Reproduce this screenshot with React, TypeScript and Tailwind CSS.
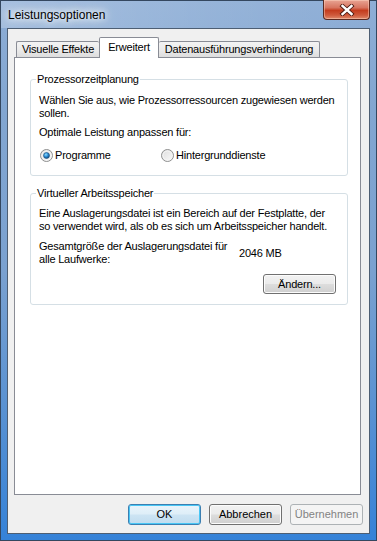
import React from 'react';

const FONT = "font-['Liberation_Sans',Arial,sans-serif]";

const Radio: React.FC<{ checked?: boolean; label: string }> = ({ checked, label }) => (
    <label className="flex items-center">
        <svg width="13" height="13" viewBox="0 0 13 13" className="mr-[2px] shrink-0">
            <defs>
                <linearGradient id="rbg" x1="0" y1="0" x2="1" y2="1">
                    <stop offset="0" stopColor="#dcdcdc" />
                    <stop offset="1" stopColor="#fbfbfb" />
                </linearGradient>
                <radialGradient id="rdot" cx="0.4" cy="0.35" r="0.7">
                    <stop offset="0" stopColor="#8fe0ff" />
                    <stop offset="0.5" stopColor="#2a8ad4" />
                    <stop offset="1" stopColor="#0b3d6b" />
                </radialGradient>
            </defs>
            <circle cx="6.5" cy="6.5" r="6" fill="url(#rbg)" stroke="#8e8f8f" strokeWidth="1" />
            <circle cx="6.5" cy="6.5" r="4.5" fill="none" stroke="#f4f4f4" strokeWidth="1" />
            {checked && <circle cx="6.5" cy="6.5" r="3" fill="url(#rdot)" stroke="#1c5380" strokeWidth="0.6" />}
        </svg>
        <span>{label}</span>
    </label>
);

const Btn: React.FC<{ label: string; kind?: 'default' | 'normal' | 'disabled'; h?: string }> = ({ label, kind = 'normal', h = 'h-[21px]' }) => {
    const styles = {
        normal: 'border-[#707070] bg-[linear-gradient(180deg,#f2f2f2_0%,#ebebeb_48%,#dddddd_52%,#cfcfcf_100%)] text-black shadow-[inset_0_0_0_1px_#fcfcfc]',
        default: 'border-[#3c7fb1] bg-[linear-gradient(180deg,#e9f4fb_0%,#deeef8_48%,#cde4f3_52%,#c0dcef_100%)] text-black shadow-[inset_0_0_0_1px_#48c6f5]',
        disabled: 'border-[#adb2b5] bg-[#f4f4f4] text-[#838383]',
    } as const;
    return (
        <div className={`w-[73px] ${h} rounded-[3px] border flex items-center justify-center text-[11px] ${styles[kind]}`}>
            {label}
        </div>
    );
};

const CloseButton = () => (
    <div className="w-[47px] h-[20px] -mt-[1px] rounded-b-[4px] border border-[#5a2a22] border-t-0 bg-[linear-gradient(180deg,#e8a493_0%,#d77560_40%,#c43c1e_55%,#cf5a3c_80%,#e08a6c_100%)] shadow-[inset_0_0_0_1px_rgba(255,220,200,0.45)] flex items-center justify-center">
        <svg width="16" height="12" viewBox="0 0 16 12">
            <path d="M3.5 2 L12.5 10 M12.5 2 L3.5 10" stroke="#4a1a12" strokeWidth="4.2" strokeLinecap="square" />
            <path d="M3.5 2 L12.5 10 M12.5 2 L3.5 10" stroke="#ffffff" strokeWidth="2.4" strokeLinecap="square" />
        </svg>
    </div>
);

export default function App() {
    return (
        <div className={`${FONT} w-[377px] h-[541px] flex flex-col border border-[#34475f] px-[6px] pb-[6px] bg-[linear-gradient(180deg,#8eaed6_0%,#82a6d1_20%,#7aa1d0_50%,#5a92d2_75%,#3582d8_100%)] text-black`}>
            {/* title bar */}
            <div className="h-[27px] -mx-[6px] px-[6px] flex items-start shrink-0 bg-[linear-gradient(90deg,rgba(255,255,255,0.22)_0%,rgba(255,255,255,0.08)_55%,rgba(255,255,255,0)_100%)]">
                <span className="mt-[7px] ml-[1px] text-[12px] leading-[15px] [text-shadow:0_0_6px_#ffffff,0_0_10px_#ffffff,0_0_14px_#e8f2ff]">
                    Leistungsoptionen
                </span>
                <div className="ml-auto">
                    <CloseButton />
                </div>
            </div>

            {/* client area */}
            <div className="flex-1 border border-[#4d5e73] bg-[#f0f0f0] flex flex-col text-[11px] tracking-[-0.2px]">
                {/* tabs */}
                <div className="h-[20px] mt-[8px] pl-[8px] flex items-end shrink-0">
                    <div className="w-[83px] h-[16px] border border-b-0 border-r-0 border-[#898c95] rounded-t-[2px] bg-[linear-gradient(180deg,#f3f3f3_0%,#ebebeb_50%,#dddddd_100%)] flex items-center justify-center leading-[13px]">
                        Visuelle Effekte
                    </div>
                    <div className="relative z-10 w-[60px] h-[21px] -mb-[1px] border border-b-0 border-[#898c95] rounded-t-[2px] bg-white flex justify-center pt-[3px] leading-[13px]">
                        Erweitert
                    </div>
                    <div className="w-[161px] h-[16px] border border-b-0 border-l-0 border-[#898c95] rounded-t-[2px] bg-[linear-gradient(180deg,#f3f3f3_0%,#ebebeb_50%,#dddddd_100%)] flex items-center justify-center leading-[13px]">
                        Datenausführungsverhinderung
                    </div>
                </div>

                {/* tab panel */}
                <div className="ml-[6px] mr-[8px] h-[438px] border border-[#898c95] bg-white flex flex-col leading-[13px] shrink-0">
                    <fieldset className="mt-[15px] ml-[15px] mr-[12px] border border-[#d5dfe5] rounded-[3px] px-[8px] pb-[13px]">
                        <legend className="-ml-[3px] px-[1px] leading-[13px]">Prozessorzeitplanung</legend>
                        <p className="mt-[8px]">Wählen Sie aus, wie Prozessorressourcen zugewiesen werden sollen.</p>
                        <p className="mt-[6px]">Optimale Leistung anpassen für:</p>
                        <div className="mt-[10px] flex ml-[1px]">
                            <div className="w-[121px]">
                                <Radio checked label="Programme" />
                            </div>
                            <Radio label="Hintergrunddienste" />
                        </div>
                    </fieldset>

                    <fieldset className="mt-[11px] ml-[15px] mr-[12px] border border-[#d5dfe5] rounded-[3px] px-[8px] pb-[10px]">
                        <legend className="-ml-[3px] px-[1px] leading-[13px]">Virtueller Arbeitsspeicher</legend>
                        <p className="mt-[7px]">Eine Auslagerungsdatei ist ein Bereich auf der Festplatte, der so verwendet wird, als ob es sich um Arbeitsspeicher handelt.</p>
                        <div className="mt-[7px] flex items-center">
                            <p className="w-[200px]">Gesamtgröße der Auslagerungsdatei für alle Laufwerke:</p>
                            <span>2046 MB</span>
                        </div>
                        <div className="mt-[8px] flex justify-end mr-[3px]">
                            <Btn label="Ändern..." h="h-[20px]" />
                        </div>
                    </fieldset>
                </div>

                {/* bottom buttons */}
                <div className="mt-[9px] mr-[6px] flex justify-end gap-[8px] tracking-normal">
                    <Btn label="OK" kind="default" />
                    <Btn label="Abbrechen" />
                    <Btn label="Übernehmen" kind="disabled" />
                </div>
            </div>
        </div>
    );
}
